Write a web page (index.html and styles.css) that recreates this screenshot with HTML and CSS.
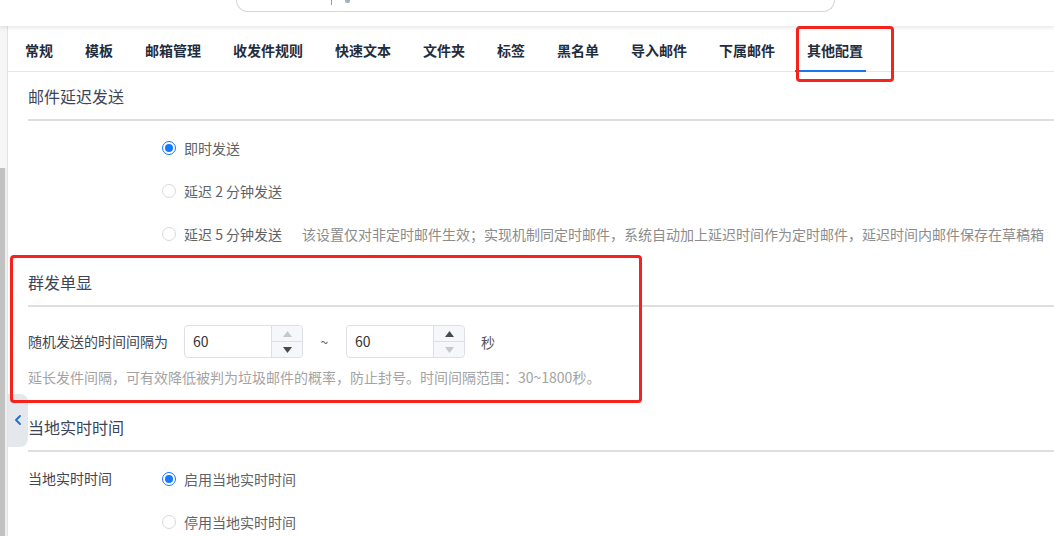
FILE: index.html
```html
<!DOCTYPE html>
<html lang="zh-CN">
<head>
  <meta charset="UTF-8">
  <title>其他配置</title>
  <link rel="stylesheet" href="styles.css">
</head>
<body>

<div class="header">
  <div class="search">
    <span class="search-sep"></span>
    <span class="search-icon"></span>
  </div>
</div>

<div class="page">
  <div class="rail">
    <div class="rail-track"></div>
    <div class="rail-thumb"></div>
  </div>

  <div class="main">
    <div class="tabs">
      <div class="tab">常规</div>
      <div class="tab">模板</div>
      <div class="tab">邮箱管理</div>
      <div class="tab">收发件规则</div>
      <div class="tab">快速文本</div>
      <div class="tab">文件夹</div>
      <div class="tab">标签</div>
      <div class="tab">黑名单</div>
      <div class="tab">导入邮件</div>
      <div class="tab">下属邮件</div>
      <div class="tab active">其他配置</div>
    </div>

    <div class="section">
      <div class="section-title">邮件延迟发送</div>
      <div class="fields">
        <div class="field">
          <div class="field-label"></div>
          <label class="radio checked"><span class="radio-dot"></span>即时发送</label>
        </div>
        <div class="field">
          <div class="field-label"></div>
          <label class="radio"><span class="radio-dot"></span>延迟 2 分钟发送</label>
        </div>
        <div class="field">
          <div class="field-label"></div>
          <label class="radio"><span class="radio-dot"></span>延迟 5 分钟发送</label>
          <span class="note">该设置仅对非定时邮件生效；实现机制同定时邮件，系统自动加上延迟时间作为定时邮件，延迟时间内邮件保存在草稿箱</span>
        </div>
      </div>
    </div>

    <div class="section section-group">
      <div class="section-title">群发单显</div>
      <div class="interval-row">
        <div class="field-label wide">随机发送的时间间隔为</div>
        <div class="number">
          <span class="number-value">60</span>
          <div class="spin">
            <span class="spin-btn off"><svg width="9" height="6" viewBox="0 0 9 6"><path d="M4.5 0 L9 6 L0 6 Z"/></svg></span>
            <span class="spin-btn"><svg width="9" height="6" viewBox="0 0 9 6"><path d="M0 0 L9 0 L4.5 6 Z"/></svg></span>
          </div>
        </div>
        <span class="tilde">~</span>
        <div class="number">
          <span class="number-value">60</span>
          <div class="spin">
            <span class="spin-btn"><svg width="9" height="6" viewBox="0 0 9 6"><path d="M4.5 0 L9 6 L0 6 Z"/></svg></span>
            <span class="spin-btn off"><svg width="9" height="6" viewBox="0 0 9 6"><path d="M0 0 L9 0 L4.5 6 Z"/></svg></span>
          </div>
        </div>
        <span class="unit">秒</span>
      </div>
      <div class="hint">延长发件间隔，可有效降低被判为垃圾邮件的概率，防止封号。时间间隔范围：30~1800秒。</div>
    </div>

    <div class="section section-local">
      <div class="section-title">当地实时时间</div>
      <div class="fields">
        <div class="field">
          <div class="field-label">当地实时时间</div>
          <label class="radio checked"><span class="radio-dot"></span>启用当地实时时间</label>
        </div>
        <div class="field">
          <div class="field-label"></div>
          <label class="radio"><span class="radio-dot"></span>停用当地实时时间</label>
        </div>
      </div>
    </div>
  </div>
</div>

<div class="collapse-tab">
  <svg width="6" height="10" viewBox="0 0 6 10"><path d="M5 1 L1 5 L5 9" fill="none" stroke="#1a6fd6" stroke-width="1.8" stroke-linecap="round" stroke-linejoin="round"/></svg>
</div>

<div class="mark mark-tab"></div>
<div class="mark mark-group"></div>

</body>
</html>
```

FILE: styles.css
```css
body {
  font-family: "Noto Sans CJK SC", "Noto Sans", sans-serif;
  background: #fff;
  margin: 0;
  height: 536px;
  overflow: hidden;
  position: relative;
}

.header {
  height: 26px;
  background: #fff;
  padding-left: 236px;
  box-shadow: 0 2px 4px rgba(0,0,0,0.09);
  position: relative;
  z-index: 2;
}

.search {
  width: 599px;
  height: 12px;
  border: 1px solid #d6d6d6;
  border-top: none;
  border-radius: 0 0 15px 15px;
  box-sizing: border-box;
  position: relative;
}

.search-sep {
  position: absolute;
  left: 94px;
  top: 0;
  width: 1px;
  height: 5px;
  background: #9a9a9a;
}

.search-icon {
  position: absolute;
  left: 108px;
  top: 0;
  width: 5px;
  height: 3px;
  border-radius: 0 0 2px 2px;
  background: #9fb0c8;
}

.page {
  display: flex;
  height: 510px;
}

.rail {
  width: 7px;
  border-right: 1px solid #e3e3e3;
  background: #f6f6f6;
  display: flex;
  flex-direction: column;
}

.rail-track {
  height: 116px;
}

.rail-thumb {
  flex: 1;
  margin-top: 26px;
  width: 5px;
  background: #c1c1c1;
  box-shadow: 2px 0 0 #efefef;
}

.main {
  flex: 1;
}

.tabs {
  display: flex;
  height: 45px;
  padding-left: 5px;
  border-bottom: 1px solid #e4e6ea;
}

.tab {
  padding: 0 12px;
  margin-right: 8px;
  line-height: 48px;
  font-size: 14px;
  font-weight: bold;
  color: #1f2d3d;
  position: relative;
}

.tab.active::after {
  content: "";
  position: absolute;
  left: 0;
  bottom: -1px;
  width: 71px;
  height: 2px;
  background: #1677ee;
}

.section {
  padding-left: 20px;
  margin-top: 8px;
}

.section-title {
  font-size: 16px;
  line-height: 32px;
  color: #3b4557;
  padding-bottom: 7px;
  border-bottom: 2px solid #dedede;
}

.fields {
  padding-top: 5px;
}

.field {
  display: flex;
  align-items: center;
  height: 43px;
  font-size: 14px;
}

.field-label {
  width: 134px;
  flex-shrink: 0;
  color: #3f4654;
  font-size: 14px;
  align-self: flex-start;
  line-height: 43px;
}

.field-label.wide {
  width: 156px;
  align-self: center;
  line-height: 33px;
}

.radio {
  display: flex;
  align-items: center;
  gap: 8px;
  color: #606266;
}

.radio-dot {
  width: 14px;
  height: 14px;
  border: 1px solid #d9d9d9;
  border-radius: 50%;
  box-sizing: border-box;
  background: #fff;
  position: relative;
}

.radio.checked .radio-dot {
  border-color: #1677ff;
}

.radio.checked .radio-dot::after {
  content: "";
  position: absolute;
  left: 2px;
  top: 2px;
  width: 8px;
  height: 8px;
  border-radius: 50%;
  background: #1677ff;
}

.note {
  margin-left: 20px;
  color: #8c8c8c;
  white-space: nowrap;
}

.section-group {
  margin-top: 11px;
}

.interval-row {
  display: flex;
  align-items: center;
  margin-top: 18px;
  height: 33px;
  font-size: 14px;
}

.number {
  width: 119px;
  height: 33px;
  border: 1px solid #dcdfe6;
  border-radius: 4px;
  box-sizing: border-box;
  display: flex;
}

.number-value {
  flex: 1;
  padding-left: 8px;
  line-height: 31px;
  color: #333;
}

.spin {
  width: 30px;
  border-left: 1px solid #dcdfe6;
  background: #f5f7fa;
  display: flex;
  flex-direction: column;
  border-radius: 0 4px 4px 0;
}

.spin-btn {
  flex: 1;
  display: flex;
  align-items: center;
  justify-content: center;
  fill: #4a4a4a;
}

.spin-btn + .spin-btn {
  border-top: 1px solid #dcdfe6;
}

.spin-btn.off {
  fill: #c4c8cf;
}

.tilde {
  width: 43px;
  text-align: center;
  color: #666;
}

.unit {
  margin-left: 16px;
  color: #555;
}

.hint {
  margin-top: 9px;
  line-height: 20px;
  font-size: 14px;
  color: #a3a3a3;
}

.section-local {
  margin-top: 24px;
}

.collapse-tab {
  position: absolute;
  left: 8px;
  top: 394px;
  width: 20px;
  height: 53px;
  background: #e4e7ec;
  border-radius: 0 8px 8px 0;
  display: flex;
  justify-content: center;
  padding-top: 21px;
  box-sizing: border-box;
}

.mark {
  position: absolute;
  border: 3px solid #f5231b;
  border-radius: 4px;
  box-sizing: border-box;
  pointer-events: none;
  z-index: 3;
}

.mark-tab {
  left: 796px;
  top: 26px;
  width: 98px;
  height: 56px;
}

.mark-group {
  left: 10px;
  top: 255px;
  width: 632px;
  height: 148px;
}
```
